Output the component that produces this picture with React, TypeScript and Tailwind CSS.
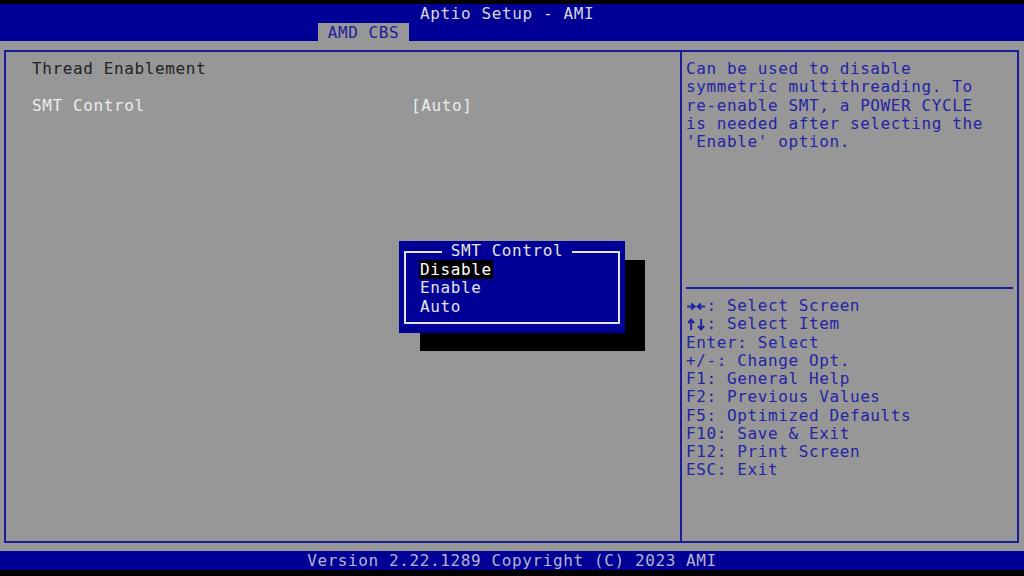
import React from "react";

const mono = { fontFamily: '"DejaVu Sans Mono", "Liberation Mono", monospace' };

function Line({ children, className = "" }: { children?: React.ReactNode; className?: string }) {
  return (
    <div className={"h-[18.25px] leading-[18.25px] whitespace-pre " + className}>{children}</div>
  );
}

function Arrow({ dir }: { dir: "r" | "l" | "u" | "d" }) {
  const paths: Record<string, string> = {
    r: "M1 9.5H8 M5 6.5L8.5 9.5L5 12.5",
    l: "M2 9.5H9 M5 6.5L1.5 9.5L5 12.5",
    u: "M5 5V15 M2 8L5 4.5L8 8",
    d: "M5 4V14 M2 11L5 14.5L8 11",
  };
  return (
    <svg width="10.24" height="18" viewBox="0 0 10 18" className="inline-block align-top">
      <path d={paths[dir]} stroke="#2424a4" strokeWidth="2" fill="none" />
    </svg>
  );
}

export default function App() {
  const help = [
    "Can be used to disable",
    "symmetric multithreading. To",
    "re-enable SMT, a POWER CYCLE",
    "is needed after selecting the",
    "'Enable' option.",
  ];
  const keys = [
    ": Select Screen",
    ": Select Item",
    "Enter: Select",
    "+/-: Change Opt.",
    "F1: General Help",
    "F2: Previous Values",
    "F5: Optimized Defaults",
    "F10: Save & Exit",
    "F12: Print Screen",
    "ESC: Exit",
  ];
  return (
    <div
      className="w-[1024px] h-[576px] bg-black flex flex-col pt-[4px] pb-[6px] text-[16px] tracking-[0.61px] overflow-hidden relative"
      style={mono}
    >
      {/* header */}
      <div className="h-[37px] bg-[#000096] flex flex-col">
        <div className="h-[18px] leading-[20px] pl-[420px] text-[#d6d6d6] whitespace-pre">Aptio Setup - AMI</div>
        <div className="h-[19px] flex items-end">
          <div className="ml-[318px] w-[91px] h-[18px] bg-[#979797] text-[#1c1c9a] text-center leading-[19px]">
            AMD CBS
          </div>
        </div>
      </div>

      {/* main */}
      <div className="flex-1 bg-[#979797] pt-[9px] pl-[4px] pr-[5px] pb-[8px] flex">
        <div className="flex-1 flex border-2 border-[#1c1c9a]">
          {/* left panel */}
          <div className="w-[676px] border-r-2 border-[#1c1c9a] pt-[8px] pl-[26px] pr-[10px]">
            <Line className="text-[#222222]">Thread Enablement</Line>
            <Line />
            <div className="flex h-[18.25px] leading-[18.25px] text-[#ececec]">
              <span className="w-[381px] whitespace-pre">SMT Control</span>
              <span className="-ml-[2px]">[Auto]</span>
            </div>
          </div>
          {/* right panel */}
          <div className="flex-1 flex flex-col pt-[8px] text-[#2424a4]">
            <div className="pl-[4px] h-[227px]">
              {help.map((t) => (
                <Line key={t}>{t}</Line>
              ))}
            </div>
            <div className="mx-[4px] h-[2px] bg-[#1c1c9a]" />
            <div className="pl-[4px] pt-[8px]">
              {keys.map((t, i) => (
                <Line key={t}>
                  {i === 0 && (
                    <>
                      <Arrow dir="r" />
                      <Arrow dir="l" />
                    </>
                  )}
                  {i === 1 && (
                    <>
                      <Arrow dir="u" />
                      <Arrow dir="d" />
                    </>
                  )}
                  {t}
                </Line>
              ))}
            </div>
          </div>
        </div>
      </div>

      {/* footer */}
      <div className="h-[19px] bg-[#000096] text-center text-[#b4b4cc] leading-[20px]">
        Version 2.22.1289 Copyright (C) 2023 AMI
      </div>

      {/* popup */}
      <div className="absolute left-[420px] top-[260px] w-[225px] h-[91px] bg-black" />
      <div className="absolute left-[399px] top-[241px] w-[226px] h-[92px] bg-[#000096] pt-[10px] pl-[5px]">
        <div className="relative w-[216px] h-[73px] border-2 border-[#e4e4e4]">
          <div className="absolute -top-[11px] left-0 right-0 flex justify-center">
            <span className="bg-[#000096] px-[9px] -ml-[10px] text-[#e4e4e4] leading-[18px]">SMT Control</span>
          </div>
          <div className="pt-[8px] pl-[14px] text-[#e4e4e4]">
            <Line>
              <span className="bg-black text-white px-[1px] -ml-[1px]">Disable</span>
            </Line>
            <Line>Enable</Line>
            <Line>Auto</Line>
          </div>
        </div>
      </div>
    </div>
  );
}
